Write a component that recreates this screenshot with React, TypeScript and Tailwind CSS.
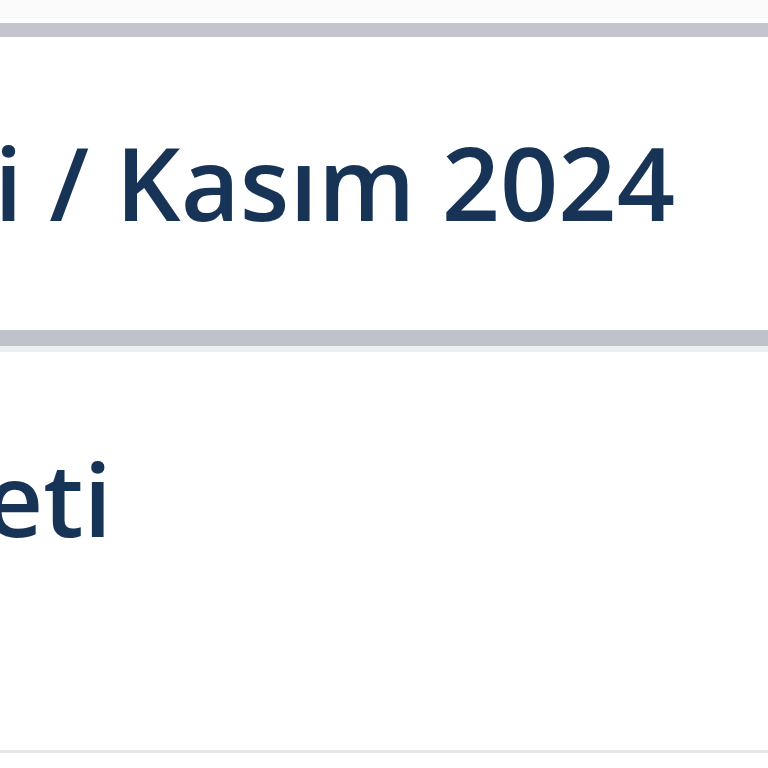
export default function App() {
  return (
    <div className="w-[768px] h-[768px] overflow-hidden bg-white text-[#173456]" style={{ fontFamily: '"Open Sans", "Noto Sans", sans-serif' }}>
      <div className="h-[17px] bg-[#fbfbfb]" />
      <div className="h-[6px] bg-[#fdfdfe] border-t border-[#f2f5f8]" />
      <div className="h-[14px] bg-[#c3c4cd]" />
      <div className="h-[293px] bg-white flex items-start justify-end pt-[94px] pr-[93px]">
        <span className="whitespace-nowrap text-[102px] font-semibold leading-none">i / Kasım 2024</span>
      </div>
      <div className="h-[16px] bg-[#c0c2cb]" />
      <div className="h-[6px] bg-[#eceef1]" />
      <div className="h-[398px] bg-white flex items-start pt-[95px]">
        <div className="w-[112px] shrink-0 flex justify-end">
          <span className="whitespace-nowrap text-[102px] font-semibold leading-none">eti</span>
        </div>
      </div>
      <div className="h-[3px] bg-[#e6e6e6]" />
      <div className="h-[15px] bg-white" />
    </div>
  );
}
